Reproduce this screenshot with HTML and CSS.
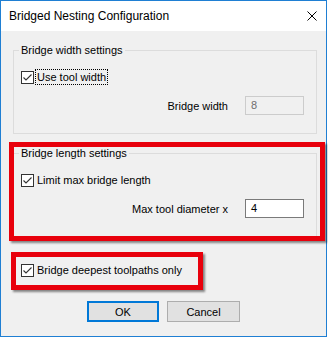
FILE: index.html
```html
<!DOCTYPE html>
<html lang="en">
<head>
    <meta charset="UTF-8">
    <meta name="viewport" content="width=device-width, initial-scale=1.0">
    <title>Bridged Nesting Configuration</title>
    <link rel="stylesheet" href="styles.css">
</head>
<body>
    <div class="dialog">
        <div class="titlebar">
            <span class="title">Bridged Nesting Configuration</span>
            <svg class="close" width="10" height="10" viewBox="0 0 10 10">
                <path d="M0.5 0.5 L9.5 9.5 M9.5 0.5 L0.5 9.5" stroke="#000" stroke-width="1" fill="none"/>
            </svg>
        </div>
        <div class="content">
            <div class="group">
                <div class="group-title">Bridge width settings</div>
                <div class="check-row">
                    <span class="box"><svg width="11" height="11" viewBox="0 0 11 11"><path d="M1.5 5.5 L4 8 L9.5 2.5" stroke="#333" stroke-width="1.1" fill="none"/></svg></span>
                    <span class="check-label focus">Use tool width</span>
                </div>
                <div class="field-row">
                    <span>Bridge width</span>
                    <span class="textbox disabled">8</span>
                </div>
            </div>

            <div class="group">
                <span class="mark mark-length"></span>
                <div class="group-title">Bridge length settings</div>
                <div class="check-row">
                    <span class="box"><svg width="11" height="11" viewBox="0 0 11 11"><path d="M1.5 5.5 L4 8 L9.5 2.5" stroke="#333" stroke-width="1.1" fill="none"/></svg></span>
                    <span class="check-label">Limit max bridge length</span>
                </div>
                <div class="field-row">
                    <span>Max tool diameter x</span>
                    <span class="textbox">4</span>
                </div>
            </div>

            <div class="check-row deepest">
                <span class="mark mark-deepest"></span>
                <span class="box"><svg width="11" height="11" viewBox="0 0 11 11"><path d="M1.5 5.5 L4 8 L9.5 2.5" stroke="#333" stroke-width="1.1" fill="none"/></svg></span>
                <span class="check-label">Bridge deepest toolpaths only</span>
            </div>

            <div class="buttons">
                <button class="btn btn-default">OK</button>
                <button class="btn">Cancel</button>
            </div>
        </div>
    </div>
</body>
</html>
```

FILE: styles.css
```css
body {
    margin: 0;
    background: #fff;
    font-family: "Liberation Sans", Arial, sans-serif;
    font-size: 11px;
    color: #000;
}
.dialog {
    width: 327px;
    height: 337px;
    box-sizing: border-box;
    border: 1px solid #1f7fd3;
    display: flex;
    flex-direction: column;
}
.titlebar {
    height: 30px;
    background: #fff;
    display: flex;
    align-items: center;
    justify-content: space-between;
    padding-left: 8px;
}
.title {
    font-size: 12px;
    line-height: 30px;
}
.close {
    margin-right: 9px;
}
.content {
    flex: 1;
    background: #f0f0f0;
    display: flex;
    flex-direction: column;
}
.group {
    position: relative;
    margin: 19px 9px 0 12px;
    border: 1px solid #dcdcdc;
    padding-bottom: 18px;
}
.group-title {
    width: fit-content;
    margin: -9px 0 0 5px;
    padding: 0 2px;
    background: #f0f0f0;
    line-height: 16px;
}
.check-row {
    display: flex;
    align-items: center;
    height: 16px;
    margin: 11px 0 0 7px;
}
.box {
    width: 11px;
    height: 11px;
    border: 1px solid #333;
    background: #fff;
    display: flex;
}
.check-label {
    margin-left: 2px;
    padding: 0 1px;
    line-height: 14px;
}
.focus {
    outline: 1px dotted #000;
}
.field-row {
    display: flex;
    align-items: center;
    justify-content: flex-end;
    gap: 17px;
    margin-top: 11px;
    padding-right: 12px;
}
.textbox {
    width: 59px;
    height: 19px;
    box-sizing: border-box;
    border: 1px solid #7a7a7a;
    background: #fff;
    padding-left: 5px;
    line-height: 17px;
}
.textbox.disabled {
    border-color: #cccccc;
    background: #f0f0f0;
    color: #6d6d6d;
}
.deepest {
    position: relative;
    width: fit-content;
    margin: 25px 0 0 20px;
}
.mark {
    position: absolute;
    box-sizing: border-box;
    border: 5px solid #e8000c;
    box-shadow: 2px 2px 2px rgba(0, 0, 0, 0.45);
}
.mark-length {
    left: -5px;
    top: -12px;
    width: 316px;
    height: 99px;
}
.mark-deepest {
    left: -10px;
    top: -10px;
    width: 192px;
    height: 38px;
}
.buttons {
    display: flex;
    gap: 8px;
    margin: 23px 0 0 86px;
}
.btn {
    height: 21px;
    width: 73px;
    padding: 0;
    font-family: "Liberation Sans", Arial, sans-serif;
    font-size: 11px;
    color: #000;
    background: #e1e1e1;
    border: 1px solid #adadad;
}
.btn-default {
    width: 72px;
    border-color: #0078d7;
    box-shadow: inset 0 0 0 1px #0078d7;
}
```
